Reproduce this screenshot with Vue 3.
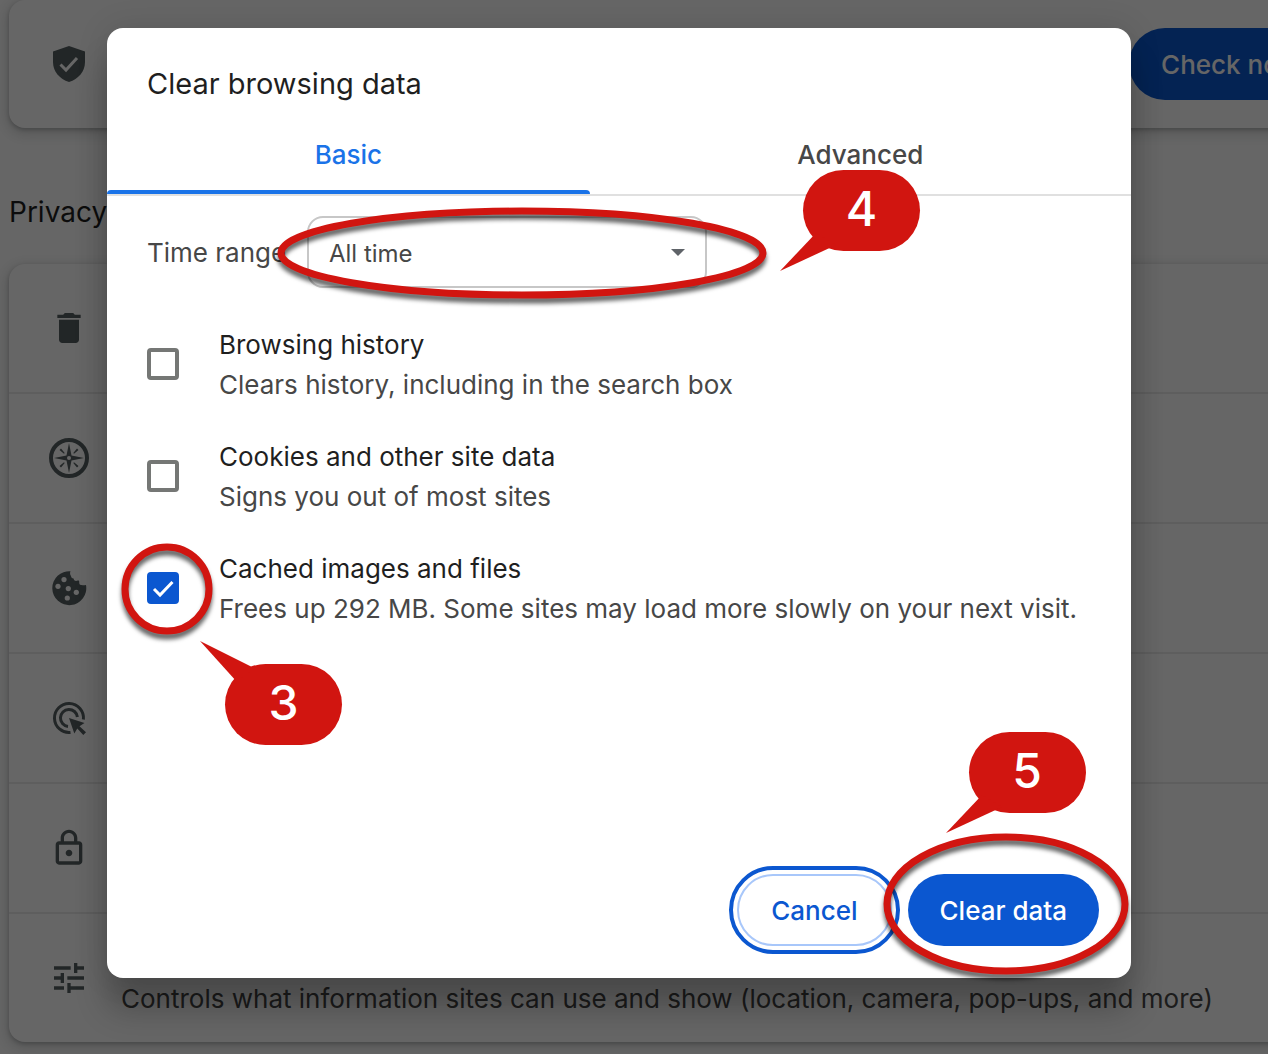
<template>
  <div class="settings">
    <main class="page">
      <section class="card safety-card">
        <svg class="icon" viewBox="0 0 40 40" aria-hidden="true">
          <path d="M20 2 36 7.500V18c0 9.500-6.500 17-16 20C10.500 35 4 27.500 4 18V7.500z" />
          <path class="knockout-line" d="m11.500 20.500 5.500 5.500 11-12" />
        </svg>
        <button type="button" class="pill pill-filled">Check now</button>
      </section>

      <h2 class="section-title">Privacy</h2>

      <ul class="card row-list">
        <li v-for="row in rows" :key="row.id" class="row">
          <svg v-if="row.id === 'clear'" class="icon" viewBox="0 0 24 24" aria-hidden="true">
            <path d="M6 19c0 1.100.9 2 2 2h8c1.100 0 2-.9 2-2V7H6v12zM19 4h-3.500l-1-1h-5l-1 1H5v2h14V4z" />
          </svg>
          <svg v-else-if="row.id === 'guide'" class="icon" viewBox="0 0 40 40" aria-hidden="true">
            <circle class="line" cx="20" cy="20" r="18" stroke-width="4" />
            <path d="m20 5 2.500 12.500L35 20l-12.500 2.500L20 35l-2.500-12.500L5 20l12.500-2.500z" />
            <path d="m10.500 12 1.500-1.500 3.700 4.500-.7.700zM28 10.500l1.500 1.500-4.500 3.700-.7-.7zM29.500 28 28 29.500l-3.700-4.500.7-.7zM12 29.500 10.500 28l4.500-3.700.7.700z" />
            <circle class="knockout" cx="20" cy="20" r="2" />
          </svg>
          <svg v-else-if="row.id === 'cookies'" class="icon" viewBox="0 0 40 40" aria-hidden="true">
            <path d="M21.500 3.200A17 17 0 1 0 37 17c-2 .3-4.500.5-6-.2-1-1-.7-2.500-.9-4-1.200-.6-2-.4-3 .3-1.500-.3-2.300-.9-2.500-2.600-1.600-.3-2.500-.9-2.600-2.500-1-1.500-1.300-3-.5-4.800z" />
            <g class="knockout">
              <circle cx="15" cy="11.600" r="2.600" />
              <circle cx="9" cy="18.300" r="2.600" />
              <circle cx="19.300" cy="20.600" r="2.600" />
              <circle cx="27.300" cy="24.300" r="2.600" />
              <circle cx="18.300" cy="30" r="2.600" />
            </g>
          </svg>
          <svg v-else-if="row.id === 'ads'" class="icon" viewBox="0 0 40 40" aria-hidden="true">
            <path class="line" stroke-width="3" d="M34.400 21.500A14.500 14.500 0 1 0 21.500 34.400" />
            <path class="line" stroke-width="3" d="M28.400 19A8.500 8.500 0 1 0 19 28.400" />
            <path d="m20 20 15.500 5-5 3.300 6.500 6-2.700 2.700-6-6.500-3 5z" />
          </svg>
          <svg v-else-if="row.id === 'security'" class="icon" viewBox="0 0 24 24" aria-hidden="true">
            <path d="M18 8h-1V6c0-2.760-2.240-5-5-5S7 3.240 7 6v2H6c-1.100 0-2 .9-2 2v10c0 1.100.9 2 2 2h12c1.100 0 2-.9 2-2V10c0-1.100-.9-2-2-2zM9 6c0-1.660 1.340-3 3-3s3 1.340 3 3v2H9V6zm9 14H6V10h12v10zm-6-3c1.100 0 2-.9 2-2s-.9-2-2-2-2 .9-2 2 .9 2 2 2z" />
          </svg>
          <svg v-else class="icon" viewBox="0 0 24 24" aria-hidden="true">
            <path d="M3 17v2h6v-2H3zM3 5v2h10V5H3zm10 16v-2h8v-2h-8v-2h-2v6h2zM7 9v2H3v2h4v2h2V9H7zm14 4v-2H11v2h10zm-6-4h2V7h4V5h-4V3h-2v6z" />
          </svg>
          <p v-if="row.description" class="row-description">{{ row.description }}</p>
        </li>
      </ul>
    </main>

    <div class="backdrop">
      <section class="dialog" role="dialog" aria-modal="true" aria-labelledby="dialog-title">
        <h1 id="dialog-title">Clear browsing data</h1>

        <div class="tabs" role="tablist">
          <button
            v-for="tab in tabs"
            :key="tab"
            type="button"
            role="tab"
            class="tab"
            :class="{ active: tab === activeTab }"
            :aria-selected="tab === activeTab"
            @click="activeTab = tab"
          >
            {{ tab }}
          </button>
        </div>

        <div class="dialog-body">
          <div class="time-range">
            <label for="time-range">Time range</label>
            <div class="select-box">
              <select id="time-range" v-model="timeRange">
                <option>All time</option>
              </select>
              <svg class="select-arrow" viewBox="0 0 14 7" aria-hidden="true">
                <path d="M0 0h14L7 7z" />
              </svg>
              <svg class="ring ring-range" viewBox="0 0 490 92" aria-hidden="true">
                <ellipse cx="245" cy="46" rx="241" ry="42" />
              </svg>
              <span class="callout callout-range">
                <svg class="tail" viewBox="0 0 60 50" aria-hidden="true">
                  <path d="M0 50 36 12 56 24z" />
                </svg>
                <span>4</span>
              </span>
            </div>
          </div>

          <div v-for="item in items" :key="item.id" class="item">
            <span class="check-box">
              <input :id="item.id" v-model="item.checked" type="checkbox" />
              <svg v-if="item.checked" class="check-mark" viewBox="0 0 32 32" aria-hidden="true">
                <path d="m7 17 6 6L25.500 10" />
              </svg>
              <template v-if="item.step">
                <svg class="ring ring-item" viewBox="0 0 92 92" aria-hidden="true">
                  <circle cx="46" cy="46" r="42" />
                </svg>
                <span class="callout callout-item">
                  <svg class="tail" viewBox="0 0 60 50" aria-hidden="true">
                    <path d="M0 0 54 27 37 41z" />
                  </svg>
                  <span>{{ item.step }}</span>
                </span>
              </template>
            </span>
            <label :for="item.id">
              <span class="item-title">{{ item.title }}</span>
              <span class="item-description">{{ item.description }}</span>
            </label>
          </div>
        </div>

        <div class="actions">
          <button type="button" class="pill pill-outlined">Cancel</button>
          <div class="confirm">
            <button type="button" class="pill pill-filled">Clear data</button>
            <svg class="ring ring-confirm" viewBox="0 0 246 142" aria-hidden="true">
              <ellipse cx="123" cy="71" rx="119" ry="67" />
            </svg>
            <span class="callout callout-confirm">
              <svg class="tail" viewBox="0 0 60 50" aria-hidden="true">
                <path d="M0 50 36 12 56 24z" />
              </svg>
              <span>5</span>
            </span>
          </div>
        </div>
      </section>
    </div>
  </div>
</template>

<script setup>
import { ref } from 'vue'

const rows = [
  { id: 'clear' },
  { id: 'guide' },
  { id: 'cookies' },
  { id: 'ads' },
  { id: 'security' },
  {
    id: 'site',
    description: 'Controls what information sites can use and show (location, camera, pop-ups, and more)'
  }
]

const tabs = ['Basic', 'Advanced']
const activeTab = ref('Basic')
const timeRange = ref('All time')

const items = ref([
  {
    id: 'history',
    title: 'Browsing history',
    description: 'Clears history, including in the search box',
    checked: false
  },
  {
    id: 'cookies',
    title: 'Cookies and other site data',
    description: 'Signs you out of most sites',
    checked: false
  },
  {
    id: 'cache',
    title: 'Cached images and files',
    description: 'Frees up 292 MB. Some sites may load more slowly on your next visit.',
    checked: true,
    step: 3
  }
])
</script>

<style>
body {
  margin: 0;
}
</style>

<style scoped>
.settings {
  position: relative;
  min-height: 100vh;
  overflow: hidden;
  background: #fff;
  color: #1f1f1f;
  font-family: Inter, "Liberation Sans", sans-serif;
  font-size: 26px;
  line-height: 40px;
}

.settings *,
.settings *::before,
.settings *::after {
  box-sizing: border-box;
}

button,
select {
  font: inherit;
}

/* the settings column runs past the right edge of the window */
.page {
  margin-right: -104px;
  padding-left: 9px;
}

.card {
  border-radius: 16px;
  background: #fff;
  box-shadow: 0 2px 4px rgba(60, 64, 67, 0.3), 0 4px 12px 4px rgba(60, 64, 67, 0.15);
}

.safety-card {
  display: flex;
  align-items: center;
  justify-content: space-between;
  height: 128px;
  padding: 0 40px;
}

.section-title {
  margin: 64px 0 32px;
  font-size: 28px;
  font-weight: 400;
  line-height: 40px;
}

.row-list {
  margin: 0;
  padding: 0;
  list-style: none;
}

.row {
  display: flex;
  align-items: center;
  gap: 32px;
  min-height: 128px;
  padding: 0 40px;
}

.row + .row {
  min-height: 130px;
  border-top: 2px solid #ececec;
}

.row-description {
  align-self: flex-end;
  margin: 0 0 23px;
  color: #474747;
  white-space: nowrap;
}

.icon {
  width: 40px;
  height: 40px;
  flex: 0 0 40px;
  fill: #566062;
}

.icon .line {
  fill: none;
  stroke: #566062;
}

.icon .knockout {
  fill: #fff;
}

.icon .knockout-line {
  fill: none;
  stroke: #fff;
  stroke-width: 3;
}

.pill {
  height: 72px;
  padding: 2px 32px 0;
  border: 0;
  border-radius: 36px;
  font-weight: 500;
  white-space: nowrap;
  cursor: pointer;
}

.pill-filled {
  background: #0b57d0;
  color: #fff;
}

.pill-outlined {
  border: 2px solid #a8c7fa;
  outline: 4px solid #0b57d0;
  outline-offset: 4px;
  background: #fff;
  color: #0b57d0;
}

.backdrop {
  position: absolute;
  inset: 0;
  display: grid;
  padding: 28px 137px 76px 107px;
  background: rgba(0, 0, 0, 0.6);
}

.dialog {
  display: flex;
  flex-direction: column;
  min-width: 0;
  border-radius: 16px;
  background: #fff;
  box-shadow: 0 0 32px rgba(0, 0, 0, 0.12), 0 32px 32px rgba(0, 0, 0, 0.24);
}

.dialog h1 {
  margin: 0;
  padding: 36px 40px 12px;
  font-size: 29px;
  font-weight: 400;
  line-height: 40px;
}

.tabs {
  display: flex;
  border-bottom: 2px solid #e0e0e0;
}

.tab {
  position: relative;
  flex: 1 1 auto;
  height: 78px;
  padding: 0;
  border: 0;
  background: none;
  color: #474747;
  font-weight: 500;
  cursor: pointer;
}

.tab.active {
  color: #1a73e8;
}

.tab.active::after {
  content: "";
  position: absolute;
  inset: auto 0 0;
  height: 4px;
  border-radius: 4px 4px 0 0;
  background: #1a73e8;
}

.dialog-body {
  padding: 20px 40px;
}

.time-range {
  display: flex;
  align-items: center;
  margin-bottom: 20px;
  color: #474747;
}

.time-range label {
  min-width: 160px;
  padding-top: 2px;
}

.select-box {
  position: relative;
  width: 400px;
}

.select-box select {
  display: block;
  width: 100%;
  height: 72px;
  padding: 4px 60px 0 20px;
  border: 2px solid #c7c7c7;
  border-radius: 16px;
  appearance: none;
  background: #fff;
  color: #474747;
  font-size: 24px;
}

.select-arrow {
  position: absolute;
  top: 33px;
  right: 22px;
  width: 14px;
  height: 7px;
  fill: #5f6368;
  pointer-events: none;
}

.item {
  display: flex;
  align-items: center;
  gap: 40px;
  min-height: 112px;
}

.item label {
  display: flex;
  flex-direction: column;
  padding-top: 2px;
}

.item-description {
  color: #474747;
}

.check-box {
  position: relative;
  width: 32px;
  height: 32px;
  flex: 0 0 32px;
}

.check-box input {
  display: block;
  width: 32px;
  height: 32px;
  margin: 0;
  border: 4px solid #757775;
  border-radius: 4px;
  appearance: none;
  background: #fff;
}

.check-box input:checked {
  border-color: #0b57d0;
  background: #0b57d0;
}

.check-mark {
  position: absolute;
  inset: 0;
  fill: none;
  stroke: #fff;
  stroke-width: 3;
  pointer-events: none;
}

.actions {
  display: flex;
  justify-content: flex-end;
  gap: 16px;
  margin-top: auto;
  padding: 0 32px 32px;
}

.confirm {
  position: relative;
}

/* numbered step markers drawn over the controls */
.ring {
  position: absolute;
  overflow: visible;
  fill: none;
  stroke: #d11510;
  stroke-width: 7;
  filter: drop-shadow(0 5px 2px rgba(0, 0, 0, 0.6));
  pointer-events: none;
}

.ring-range {
  top: -9px;
  left: -30px;
  width: 490px;
  height: 92px;
}

.ring-item {
  top: -29px;
  left: -26px;
  width: 92px;
  height: 92px;
}

.ring-confirm {
  top: -41px;
  left: -25px;
  width: 246px;
  height: 142px;
}

.callout {
  position: absolute;
  display: grid;
  place-items: center;
  width: 117px;
  height: 81px;
  padding-bottom: 3px;
  border-radius: 42px;
  background: #d11510;
  color: #fff;
  font-size: 48px;
  font-weight: 500;
  pointer-events: none;
}

.callout > span {
  position: relative;
}

.callout-range {
  top: -46px;
  left: 496px;
}

.callout-item {
  top: 92px;
  left: 78px;
}

.callout-confirm {
  top: -142px;
  left: 61px;
}

.tail {
  position: absolute;
  top: 51px;
  left: -23px;
  width: 60px;
  height: 50px;
  fill: #d11510;
}

.callout-item .tail {
  top: -23px;
  left: -25px;
}
</style>
